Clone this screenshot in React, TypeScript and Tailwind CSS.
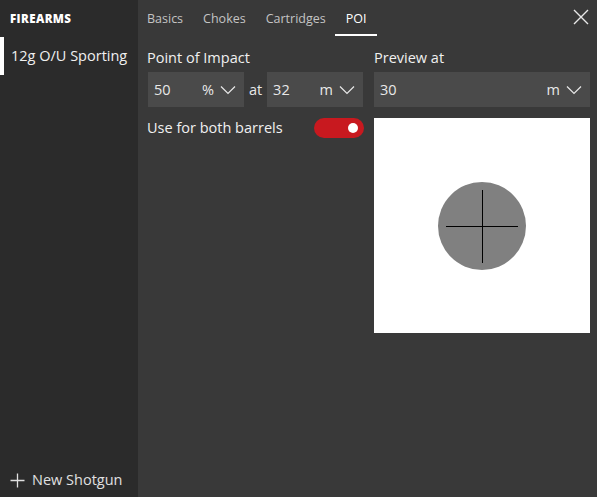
import { useState } from 'react';

function Chevron() {
  return (
    <svg className="w-[16px] h-[10px]" viewBox="0 0 16 10" fill="none" stroke="currentColor" strokeWidth={1.2}>
      <path d="M1 1.5l7 7 7-7" />
    </svg>
  );
}

function Field({ value, unit, className }: { value: string; unit: string; className: string }) {
  return (
    <div className={`flex items-center h-[35px] bg-[#4a4a4a] pl-[6px] pr-[8px] text-[14.5px] text-[#e8e8e8] ${className}`}>
      <span className="flex-1">{value}</span>
      <span className="mr-[6px]">{unit}</span>
      <Chevron />
    </div>
  );
}

export default function App() {
  const [tab] = useState('POI');
  const tabs = ['Basics', 'Chokes', 'Cartridges', 'POI'];

  return (
    <div className="flex w-[597px] h-[497px] bg-[#393939] text-white" style={{ fontFamily: '"Open Sans", "Noto Sans", sans-serif' }}>
      {/* Sidebar */}
      <div className="w-[138px] bg-[#2b2b2b] flex flex-col">
        <div className="pl-[10px] pt-[10px] h-[37px] text-[11.5px] font-extrabold tracking-[0.4px]">FIREARMS</div>
        <div className="flex h-[38px] items-center">
          <div className="w-[4px] h-full bg-white" />
          <span className="pl-[7px] text-[14.5px] text-[#f0f0f0]">12g O/U Sporting</span>
        </div>
        <div className="flex-1" />
        <div className="flex items-center pl-[10px] pb-[6px] text-[14.5px] text-[#e0e0e0]">
          <svg className="w-[15px] h-[15px] mr-[7px]" viewBox="0 0 15 15" stroke="currentColor" strokeWidth={1.3}>
            <path d="M7.5 0.5v14M0.5 7.5h14" />
          </svg>
          New Shotgun
        </div>
      </div>

      {/* Main */}
      <div className="flex-1 flex flex-col pl-[9px] pr-[7px]">
        <div className="flex items-start h-[39px]">
          <div className="flex gap-[20px] text-[12.5px] pt-[10px]">
            {tabs.map((t) => (
              <div key={t} className={`relative pb-[8px] ${t === tab ? 'text-white px-[11px] -mx-[11px]' : 'text-[#c4c4c4]'}`}>
                {t}
                {t === tab && <div className="absolute left-0 right-0 bottom-[1px] h-[2px] bg-white" />}
              </div>
            ))}
          </div>
          <div className="flex-1" />
          <svg className="w-[16px] h-[16px] mt-[9px] mr-[1px]" viewBox="0 0 16 16" stroke="#e8e8e8" strokeWidth={1.4}>
            <path d="M1 1l14 14M15 1L1 15" />
          </svg>
        </div>

        <div className="flex gap-[11px]">
          <div className="w-[216px] flex flex-col">
            <div className="text-[14.5px] h-[33px] pt-[9px] leading-[20px] text-[#f0f0f0]">Point of Impact</div>
            <div className="flex items-center">
              <Field value="50" unit="%" className="w-[96px] ml-[1px]" />
              <span className="text-[14.5px] mx-[5px] text-[#e8e8e8]">at</span>
              <Field value="32" unit="m" className="w-[96px]" />
            </div>
            <div className="flex items-center justify-between mt-[10px]">
              <span className="text-[14.5px] text-[#f0f0f0]">Use for both barrels</span>
              <div className="w-[50px] h-[20px] rounded-full bg-[#c8191f] flex items-center justify-end pr-[6px] mr-[-1px]">
                <div className="w-[10px] h-[10px] rounded-full bg-white" />
              </div>
            </div>
          </div>

          <div className="w-[216px] flex flex-col">
            <div className="text-[14.5px] h-[33px] pt-[9px] leading-[20px] text-[#f0f0f0]">Preview at</div>
            <Field value="30" unit="m" className="w-[216px]" />
            <div className="mt-[11px] w-[216px] h-[215px] bg-white flex items-center justify-center">
              <svg width="90" height="90" viewBox="0 0 90 90">
                <circle cx="45" cy="45" r="44" fill="#808080" />
                <path d="M9 45.5h72M45.5 9v73" stroke="#000" strokeWidth={1} />
              </svg>
            </div>
          </div>
        </div>
      </div>
    </div>
  );
}
